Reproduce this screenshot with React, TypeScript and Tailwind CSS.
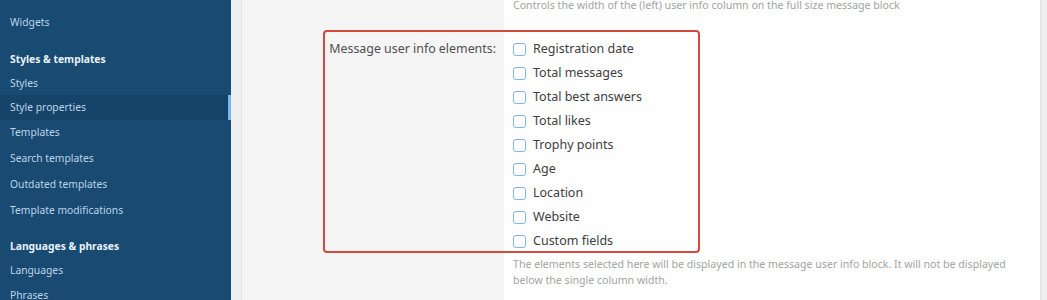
import React from "react";

const font = { fontFamily: '"Noto Sans", "Open Sans", Arial, sans-serif' };

type NavItem = { label: string; kind: "item" | "head" | "active" | "space"; h: number };

const nav: NavItem[] = [
  { label: "Widgets", kind: "item", h: 25 },
  { label: "", kind: "space", h: 13 },
  { label: "Styles & templates", kind: "head", h: 24 },
  { label: "Styles", kind: "item", h: 23 },
  { label: "Style properties", kind: "active", h: 25 },
  { label: "Templates", kind: "item", h: 26 },
  { label: "Search templates", kind: "item", h: 26 },
  { label: "Outdated templates", kind: "item", h: 26 },
  { label: "Template modifications", kind: "item", h: 25 },
  { label: "", kind: "space", h: 12 },
  { label: "Languages & phrases", kind: "head", h: 24 },
  { label: "Languages", kind: "item", h: 24 },
  { label: "Phrases", kind: "item", h: 26 },
];

const options = [
  "Registration date",
  "Total messages",
  "Total best answers",
  "Total likes",
  "Trophy points",
  "Age",
  "Location",
  "Website",
  "Custom fields",
];

function Sidebar() {
  return (
    <div className="w-[231px] shrink-0 bg-[#184a72] pt-[10px] relative overflow-hidden">
      {nav.map((n, i) => {
        if (n.kind === "space") return <div key={i} style={{ height: n.h }} />;
        const cls =
          n.kind === "head"
            ? "flex items-center pl-[10px] text-[10.3px] font-bold text-[#e9f1f8] relative"
            : n.kind === "active"
            ? "flex items-center pl-[10px] text-[10.3px] text-[#bcd4e8] bg-[#164369] relative"
            : "flex items-center pl-[10px] text-[10.3px] text-[#bcd4e8] relative";
        return (
          <div key={i} className={cls} style={{ height: n.h }}>
            {n.label}
            {n.kind === "active" && (
              <div className="absolute right-0 top-0 h-full w-[3px] bg-[#78b8ea]" />
            )}
          </div>
        );
      })}
    </div>
  );
}

function Checkbox() {
  return (
    <span className="w-[13px] h-[13px] shrink-0 rounded-[3px] border border-[#82b6e0] bg-white" />
  );
}

export default function App() {
  return (
    <div
      className="relative flex h-[300px] w-[1047px] overflow-hidden bg-[#eeeeee]"
      style={font}
    >
      <Sidebar />
      <div className="flex-1 pl-[10px] pr-[6px]">
        <div className="h-full border-l border-r border-[#e2e2e2] flex flex-col">
          {/* row 1 */}
          <div className="flex h-[28px]">
            <div className="w-[262px] shrink-0 bg-[#f5f5f5]" />
            <div className="flex-1 bg-[#fefefe] pl-[9px]">
              <div className="-mt-[3px] text-[10.6px] leading-[16px] text-[#a3a3a3] whitespace-nowrap">
                Controls the width of the (left) user info column on the full size message block
              </div>
            </div>
          </div>
          {/* row 2 */}
          <div className="flex flex-1">
            <div className="w-[262px] shrink-0 bg-[#f5f5f5] pt-[9px] pr-[8px] text-right">
              <div className="h-[24px] flex items-center justify-end text-[12.4px] text-[#4f4f4f]">
                Message user info elements:
              </div>
            </div>
            <div className="flex-1 bg-[#fefefe] pt-[9px] pl-[9px]">
              {options.map((o) => (
                <div key={o} className="h-[24px] flex items-center gap-[7px]">
                  <Checkbox />
                  <span className="text-[12.5px] text-[#3d3d3d]">{o}</span>
                </div>
              ))}
              <div className="mt-[3px] text-[10.6px] leading-[16px] text-[#a3a3a3] pr-[8px]">
                The elements selected here will be displayed in the message user info block. It will not be displayed below the single column width.
              </div>
            </div>
          </div>
        </div>
      </div>
      {/* highlight annotation */}
      <div className="absolute left-[323px] top-[30px] w-[377px] h-[223px] border-[2.5px] border-[#d24a3e] rounded-[4px] pointer-events-none" />
    </div>
  );
}
